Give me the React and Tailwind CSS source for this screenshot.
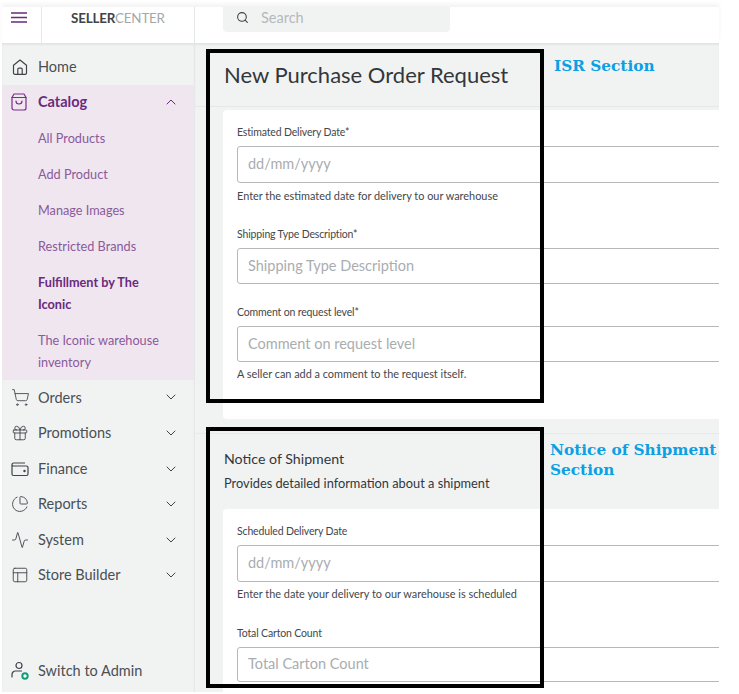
import React from 'react';
import { ChevronDown, ChevronUp, Gift, Activity, PanelsTopLeft, ShoppingCart, Search, ChartPie } from 'lucide-react';

const font = 'font-["Lato","Noto_Sans",sans-serif]';

function HomeIcon() {
    return (
        <svg width="18" height="18" viewBox="0 0 18 18" fill="none" stroke="#3f4448" strokeWidth="1.2" strokeLinejoin="round">
            <path d="M2.5 7.2 9 2l6.5 5.2V15a1.3 1.3 0 0 1-1.3 1.3H3.8A1.3 1.3 0 0 1 2.5 15z" />
            <path d="M6.8 16.3v-5a1.2 1.2 0 0 1 1.2-1.2h2a1.2 1.2 0 0 1 1.2 1.2v5" />
        </svg>
    );
}

function BagIcon() {
    return (
        <svg width="16" height="18" viewBox="0 0 16 18" fill="none" stroke="#7b2d8b" strokeWidth="1.2" strokeLinecap="round" strokeLinejoin="round">
            <path d="M3 1h10l2 3.5V15a2 2 0 0 1-2 2H3a2 2 0 0 1-2-2V4.500z" />
            <path d="M1 4.500h14" />
            <path d="M5 8a3 3 0 0 0 6 0" />
        </svg>
    );
}

function WalletIcon() {
    return (
        <svg width="18" height="16" viewBox="0 0 18 16" fill="none" stroke="#3f4448" strokeWidth="1.200" strokeLinejoin="round">
            <path d="M1 3.500V13a1.500 1.500 0 0 0 1.500 1.500h13A1.500 1.500 0 0 0 17 13V6.500A1.500 1.500 0 0 0 15.500 5H2.500A1.500 1.500 0 0 1 1 3.500 1.500 1.500 0 0 1 2.500 2H14" />
            <circle cx="13.500" cy="10" r="0.600" fill="#3f4448" />
        </svg>
    );
}

function AdminIcon() {
    return (
        <svg width="22" height="20" viewBox="0 0 22 20" fill="none">
            <circle cx="8" cy="4.500" r="3" stroke="#3f4448" strokeWidth="1.200" />
            <path d="M1 16v-2.500A3.500 3.500 0 0 1 4.500 10h6" stroke="#3f4448" strokeWidth="1.200" strokeLinecap="round" />
            <circle cx="14" cy="15" r="2.700" stroke="#0f9d7a" strokeWidth="2" fill="#fff" />
        </svg>
    );
}

function NavRow({ icon, label, open }) {
    return (
        <div className="flex h-[35.6px] items-center pl-[9px] pr-[15px] text-[14.500px] text-[#4a4f53]">
            <span className="flex w-[27px] items-center">{icon}</span>
            <span className="flex-1">{label}</span>
            {open !== undefined && <ChevronDown size={16} strokeWidth={1.5} className="text-[#3f4448]" />}
        </div>
    );
}

function SubRow({ children, bold }) {
    return (
        <div className={`py-[7px] pl-[36px] pr-2 text-[12.700px] leading-[22px] ${bold ? 'font-bold text-[#6b2a7c]' : 'text-[#8a5a9a]'}`}>
            {children}
        </div>
    );
}

function Field({ label, placeholder, helper, className, inputClass = 'h-[36px]', helperClass = 'mt-[2px]' }) {
    return (
        <div className={className}>
            <div className="h-[20px] text-[10.500px] leading-[20px] tracking-[-0.15px] text-[#43474b]">{label}</div>
            <input
                placeholder={placeholder}
                className={`mt-[4px] block w-[520px] rounded-[3px] border border-[#b5b8ba] bg-white px-[10px] pb-[2px] text-[14.500px] outline-none placeholder:text-[#a9adb0] ${inputClass}`}
                readOnly
            />
            {helper && <div className={`h-[20px] text-[10.900px] leading-[20px] text-[#43474b] ${helperClass}`}>{helper}</div>}
        </div>
    );
}

export default function App() {
    return (
        <div className={`relative h-[694px] w-[739px] overflow-hidden bg-white ${font}`}>
            <div className="ml-[2px] w-[717px] pt-[7px]">
                {/* top bar */}
                <header className="flex h-[36px] items-stretch bg-white shadow-[0_-3px_4px_rgba(0,0,0,0.05)]">
                    <div className="flex w-[193px] shrink-0 border-r border-[#e6e8e8]">
                        <div className="w-[40px] border-r border-[#e6e8e8] pl-[9px] pt-[5px]">
                            <svg width="16" height="11" viewBox="0 0 16 11" stroke="#6b2a7c" strokeWidth="1.600">
                                <path d="M0 1h16M0 5.500h16M0 10h16" />
                            </svg>
                        </div>
                        <div className="pl-[29px] pt-[3px] text-[13.400px] leading-[16px] tracking-[-0.2px] text-[#a4a8aa]">
                            <span className="font-bold text-[#3f4448]">SELLER</span>CENTER
                        </div>
                    </div>
                    <div className="ml-[28px]">
                        <div className="flex h-[25px] w-[227px] items-center rounded-b-[4px] bg-[#f1f3f3] pb-[4px] pl-[13px] text-[14.500px] text-[#b5b8ba]">
                            <Search size={13} strokeWidth={2} className="mr-[12px] text-[#3f4448]" />
                            Search
                        </div>
                    </div>
                </header>

                <div className="flex h-[649px]">
                    {/* sidebar */}
                    <aside className="flex w-[193px] shrink-0 flex-col border-r border-[#e6e8e8] bg-[#f1f3f3] pt-[6px] shadow-[inset_0_2px_2px_rgba(0,0,0,0.06)]">
                        <NavRow icon={<HomeIcon />} label="Home" />
                        <div className="bg-[#efe6f0]">
                            <div className="mb-[1px] flex h-[34px] items-center pl-[9px] pr-[15px] text-[14.500px] font-bold text-[#6b2a7c]">
                                <span className="flex w-[27px] items-center"><BagIcon /></span>
                                <span className="flex-1">Catalog</span>
                                <ChevronUp size={16} strokeWidth={1.500} />
                            </div>
                            <SubRow>All Products</SubRow>
                            <SubRow>Add Product</SubRow>
                            <SubRow>Manage Images</SubRow>
                            <SubRow>Restricted Brands</SubRow>
                            <SubRow bold>Fulfillment by The<br />Iconic</SubRow>
                            <SubRow>The Iconic warehouse<br />inventory</SubRow>
                        </div>
                        <NavRow icon={<ShoppingCart size={19} strokeWidth={1.100} className="text-[#3f4448]" />} label="Orders" open={false} />
                        <NavRow icon={<Gift size={18} strokeWidth={1.200} className="text-[#3f4448]" />} label="Promotions" open={false} />
                        <NavRow icon={<WalletIcon />} label="Finance" open={false} />
                        <NavRow icon={<ChartPie size={18} strokeWidth={1.200} className="text-[#3f4448]" />} label="Reports" open={false} />
                        <NavRow icon={<Activity size={18} strokeWidth={1.200} className="text-[#3f4448]" />} label="System" open={false} />
                        <NavRow icon={<PanelsTopLeft size={18} strokeWidth={1.200} className="text-[#3f4448]" />} label="Store Builder" open={false} />
                        <div className="mt-auto pb-[3px]">
                            <NavRow icon={<AdminIcon />} label="Switch to Admin" />
                        </div>
                    </aside>

                    {/* main content */}
                    <main className="min-w-0 flex-1 overflow-hidden bg-[#f1f3f3]">
                        <div className="h-[64px] border-b border-[#e6e8e8] pl-[29px] pt-[16px] text-[22px] leading-[32px] text-[#33373a] shadow-[inset_0_2px_2px_rgba(0,0,0,0.06)]">
                            New Purchase Order Request
                        </div>
                        <section className="ml-[28px] mt-[3px] h-[309px] rounded-l-[4px] bg-white pl-[14px] pt-[12px]">
                            <Field inputClass="h-[37px]" helperClass="mt-[3px]" label="Estimated Delivery Date*" placeholder="dd/mm/yyyy" helper="Enter the estimated date for delivery to our warehouse" />
                            <Field className="mt-[18px]" label="Shipping Type Description*" placeholder="Shipping Type Description" />
                            <Field className="mt-[18px]" label="Comment on request level*" placeholder="Comment on request level" helper="A seller can add a comment to the request itself." />
                        </section>
                        <div className="mt-[14px] h-[76px] border-t border-[#e8eaea] pl-[29px] pt-[14px] text-[#33373a]">
                            <div className="text-[14.200px] leading-[22px]">Notice of Shipment</div>
                            <div className="mt-[2px] text-[12.800px] leading-[22px]">Provides detailed information about a shipment</div>
                        </div>
                        <section className="ml-[28px] h-[183px] rounded-tl-[4px] bg-white pl-[14px] pt-[12px]">
                            <Field inputClass="h-[37px]" label="Scheduled Delivery Date" placeholder="dd/mm/yyyy" helper="Enter the date your delivery to our warehouse is scheduled" />
                            <Field className="mt-[19px]" inputClass="h-[35px]" label="Total Carton Count" placeholder="Total Carton Count" />
                        </section>
                    </main>
                </div>
            </div>

            {/* annotation boxes drawn over the screenshot */}
            <div className="absolute left-[206px] top-[49px] h-[354px] w-[338px] border-4 border-black" />
            <div className="absolute left-[206px] top-[427px] h-[261px] w-[338px] border-4 border-black" />
            <div className='absolute left-[554px] top-[56px] font-["DejaVu_Serif",serif] text-[15.300px] font-bold leading-[20px] text-[#0ba0e3]'>
                ISR Section
            </div>
            <div className='absolute left-[550px] top-[440px] font-["DejaVu_Serif",serif] text-[15.300px] font-bold leading-[20px] text-[#0ba0e3]'>
                Notice of Shipment<br />Section
            </div>
        </div>
    );
}
